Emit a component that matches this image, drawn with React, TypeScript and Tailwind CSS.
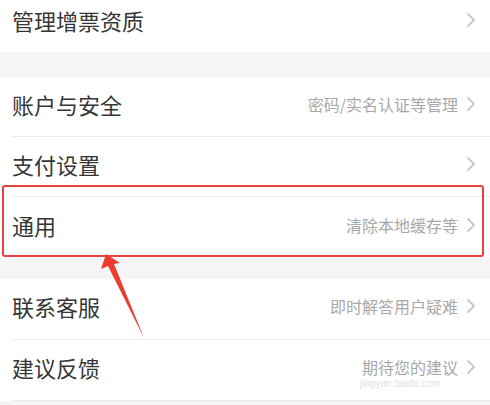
import React from 'react';

const font = { fontFamily: '"Noto Sans CJK SC", "Noto Sans", sans-serif' };

function Chevron() {
  return (
    <svg width="10" height="16" viewBox="0 0 10 16" className="shrink-0">
      <path d="M2 2 L8 8 L2 14" fill="none" stroke="#c8c8c8" strokeWidth="1.8" strokeLinecap="round" strokeLinejoin="round" />
    </svg>
  );
}

interface RowProps {
  title: string;
  hint?: string;
  divider?: boolean;
  className?: string;
  children?: React.ReactNode;
}

function Row({ title, hint, divider = true, className = 'h-[60px] pb-[6px]', children }: RowProps) {
  return (
    <div className="bg-white">
      <div className={`flex items-center pl-[12px] pr-[14px] ${className}`}>
        <span className="text-[22px] text-[#363636] leading-none">{title}</span>
        <div className="ml-auto flex items-center gap-[8px]">
          {hint && (
            <span className="relative text-[16px] text-[#a8a8a8] leading-none">
              {hint}
              {children}
            </span>
          )}
          <Chevron />
        </div>
      </div>
      {divider && <div className="ml-[12px] h-px bg-[#ececec]" />}
    </div>
  );
}

export default function App() {
  return (
    <div className="relative w-[490px] h-[405px] overflow-hidden bg-[#f5f5f5]" style={font}>
      <Row title="管理增票资质" divider={false} className="h-[52px] pb-[12px]" />
      <div className="h-[26px]" />
      <Row title="账户与安全" hint="密码/实名认证等管理" className="h-[58px] pb-[6px]" />
      <Row title="支付设置" className="h-[59px] pb-[6px]" />
      <Row title="通用" hint="清除本地缓存等" divider={false} className="h-[61px] pb-[6px]" />
      <div className="h-[21px]" />
      <Row title="联系客服" hint="即时解答用户疑难" className="h-[60px] pb-[6px]" />
      <Row title="建议反馈" hint="期待您的建议" className="h-[60px] pb-[6px]">
        <span className="absolute left-[-2px] top-[20px] text-[10px] text-[#e2e2e2] whitespace-nowrap" style={{ fontFamily: '"Liberation Sans", sans-serif' }}>
          jingyan.baidu.com
        </span>
      </Row>

      {/* annotation box */}
      <div className="absolute left-[2px] top-[185px] w-[482px] h-[72px] border-2 border-[#e8423f] rounded-[3px] pointer-events-none" />

      {/* annotation arrow */}
      <svg className="absolute left-0 top-0 pointer-events-none" width="490" height="405">
        <polygon points="106,254 120,263 114,264 144,338 108,266 101,269" fill="#ee3b2f" />
      </svg>
    </div>
  );
}
